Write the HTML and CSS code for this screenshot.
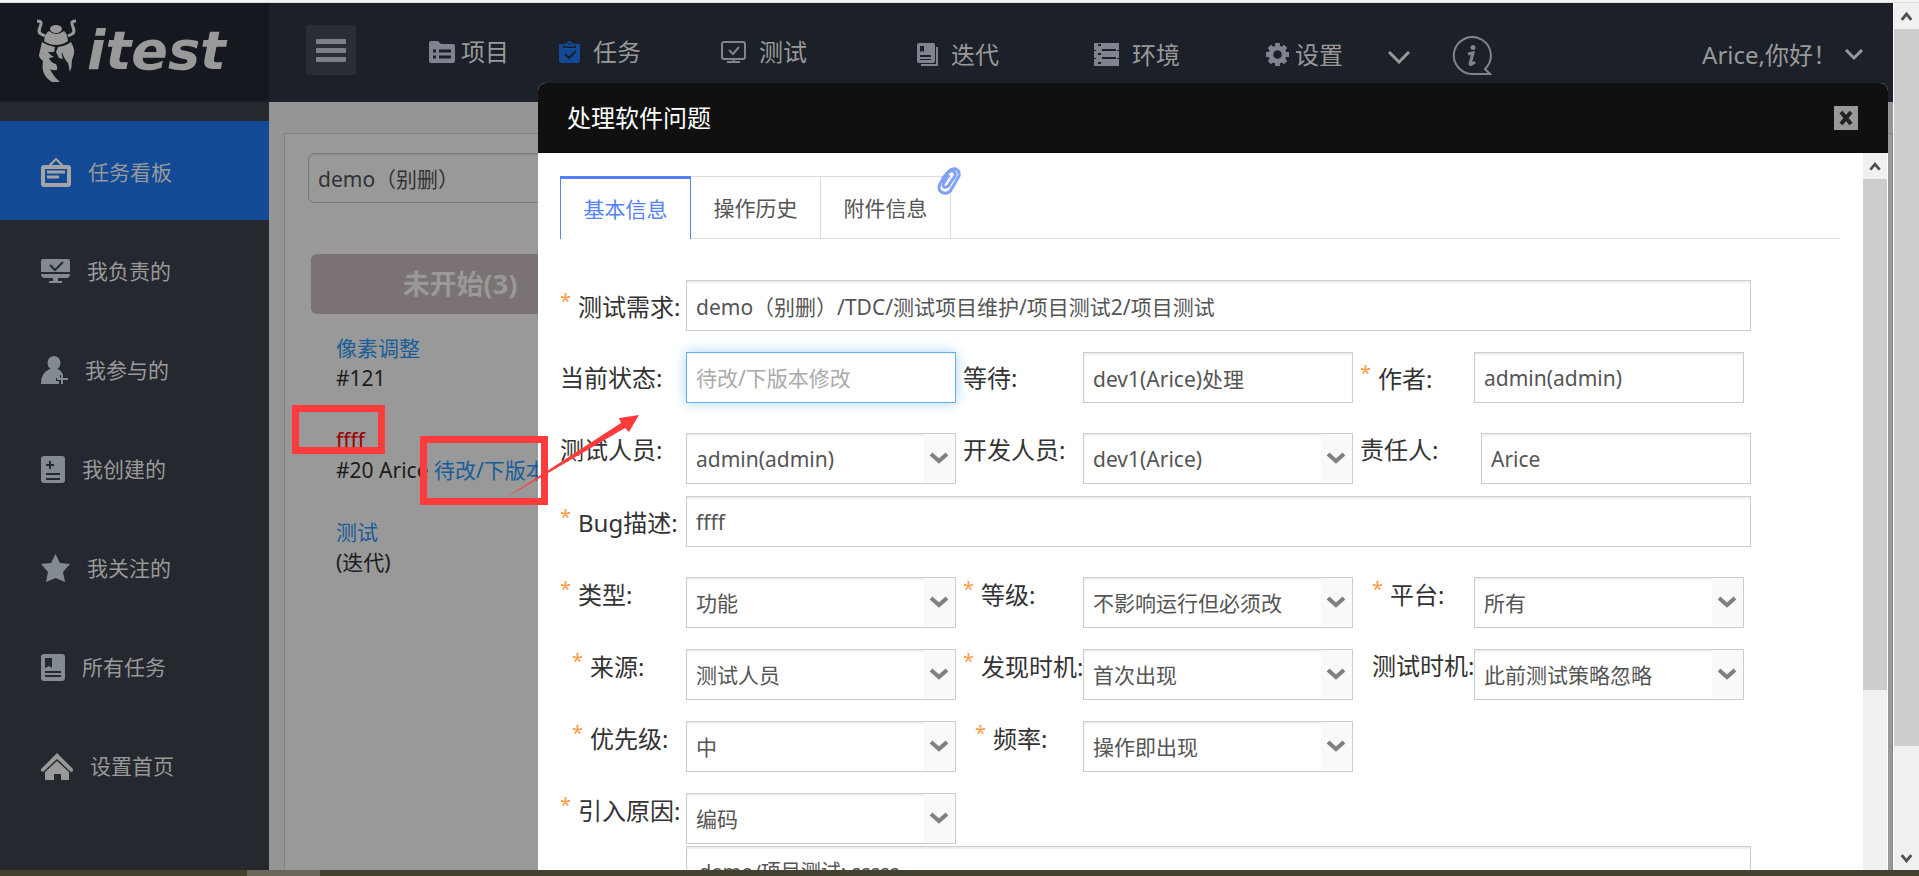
FILE: index.html
```html
<!DOCTYPE html>
<html lang="zh-CN">
<head>
<meta charset="utf-8">
<title>itest - 处理软件问题</title>
<link rel="stylesheet" href="styles.css">
</head>
<body class="screen">
<div class="top-edge"></div>
<div class="viewport">
  <div class="page">
    <header class="header">
      <a class="logo" href="#">
        <svg class="logo-bug" width="42" height="66" viewBox="0 0 42 66" fill="#999">
          <path d="M1 2q5 0 4 3c-1 4-4 8 0 10l4 2M40 2q-5 0-4 3c1 4 4 8 0 10l-4 2" fill="none" stroke="#999" stroke-width="3"/>
          <ellipse cx="20" cy="10" rx="6" ry="4"/>
          <path d="M13 12q7 6 15 0q3 2 4 10q-5 4-12 4t-12-4q1-8 5-10z"/>
          <path d="M6 23q6 4 13 5l-1 5-6 0q3 4 6 5l-5 1q2 5 7 6q2 3 1 6-4 1-7-1q3 7 10 13l-8 0q-7-4-9-11q-1-5 0-10-4-3-4-6z"/>
          <path d="M22 28q8-1 13-5q4 7 3 12l-2 6q0 7-2 12l-2-9q-4-4-6-11-1 3 1 7l-4-1-3-6z"/>
        </svg>
        <span class="logo-text">itest</span>
      </a>
      <button class="menu-btn" aria-label="菜单"><span class="bar"></span><span class="bar"></span><span class="bar"></span></button>
      <nav class="nav">
        <a class="nav-item tight" href="#">
          <svg width="26" height="22" viewBox="0 0 26 22"><path d="M2 0h7l3 3h12q2 0 2 2v15q0 2-2 2H2q-2 0-2-2V2q0-2 2-2z" fill="#80848e"/><path d="M4 10h3M10 10h12M4 16h3M10 16h12" stroke="#1c2028" stroke-width="3"/></svg>
          <span>项目</span></a>
        <a class="nav-item" href="#">
          <svg width="21" height="22" viewBox="0 0 21 22"><path d="M0 3h4v4h13V3h4v17q0 2-2 2H2q-2 0-2-2z" fill="#124a96"/><path d="M5 5V3h3a2.500 2.500 0 0 1 5 0h3v2z" fill="#124a96" stroke="#124a96"/><circle cx="10.500" cy="3" r="1" fill="#1c2028"/><path d="M6 13l4 4 7-7" fill="none" stroke="#1c2028" stroke-width="2"/></svg>
          <span>任务</span></a>
        <a class="nav-item" href="#">
          <svg width="25" height="22" viewBox="0 0 25 22" fill="none" stroke="#80848e" stroke-width="2"><rect x="1" y="1" width="23" height="17" rx="2"/><path d="M8 9l4 4 6-7M12.500 18v3M6 21h13"/></svg>
          <span>测试</span></a>
        <a class="nav-item low" href="#">
          <svg width="21" height="23" viewBox="0 0 21 23"><path d="M2 0h14q2 0 2 2v16q0 2-2 2H2q-2 0-2-2V2q0-2 2-2z" fill="#80848e"/><path d="M20 4v18H4" fill="none" stroke="#80848e" stroke-width="2"/><path d="M3 3h4v6L5 8 3 9zM3 12h11v2H3zM3 16h11v1H3z" fill="#1c2028"/></svg>
          <span>迭代</span></a>
        <a class="nav-item low" href="#">
          <svg width="25" height="23" viewBox="0 0 25 23" fill="#80848e"><rect width="25" height="7"/><rect x="2" y="7" width="21" height="9"/><rect y="8" width="25" height="7"/><rect y="16" width="25" height="7"/><path d="M4 2h3M4 11h3M4 20h3M8 7h14M8 15h14" stroke="#1c2028" stroke-width="2"/></svg>
          <span>环境</span></a>
        <a class="nav-item low tight" href="#">
          <svg width="23" height="23" viewBox="0 0 24 24"><circle cx="12" cy="12" r="7" fill="none" stroke="#80848e" stroke-width="5"/><path d="M12 0v4M12 20v4M0 12h4M20 12h4M3.500 3.500l3 3M17.500 17.500l3 3M3.500 20.500l3-3M17.500 6.500l3-3" stroke="#80848e" stroke-width="5"/></svg>
          <span>设置</span></a>
        <button class="plain" aria-label="更多"><svg width="22" height="13" viewBox="0 0 22 13" fill="none" stroke="#999" stroke-width="3"><path d="M1 1l10 10L21 1"/></svg></button>
        <button class="plain info" aria-label="帮助"><svg width="40" height="40" viewBox="0 0 40 40" fill="none" stroke="#80848e" stroke-width="2"><path d="M33 33l5 5H20A18.500 18.500 0 1 1 33 33z"/><circle cx="21" cy="11.500" r="2.500" fill="#80848e" stroke="none"/><path d="M16 18l5-1-3 11q0 1 2 0l3-2" stroke-width="3"/></svg></button>
      </nav>
      <button class="user">Arice,你好！<svg width="18" height="12" viewBox="0 0 18 12" fill="none" stroke="#999" stroke-width="3"><path d="M1 1l8 8 8-8"/></svg></button>
    </header>
    <div class="body">
      <aside class="sidebar">
        <a class="side-item active" href="#"><svg width="30" height="30" viewBox="0 0 30 30" fill="none" stroke="#a4a4a4"><rect x="2" y="10" width="26" height="18" rx="1" stroke-width="4"/><path d="M8 9l7-7 7 7" stroke-width="2"/><path d="M6 15h18M6 20h12" stroke-width="3"/></svg><span>任务看板</span></a>
        <a class="side-item" href="#"><svg width="29" height="24" viewBox="0 0 29 24" fill="#838a91"><path d="M2 0h25q2 0 2 2v11H0V2q0-2 2-2zM0 15h29q0 4-4 4H4q-4 0-4-4zM12 19h5v3h4v2H8v-2h4z"/><path d="M9 6l5 5 8-8" fill="none" stroke="#25282f" stroke-width="2"/></svg><span>我负责的</span></a>
        <a class="side-item" href="#"><svg width="27" height="28" viewBox="0 0 27 28" fill="#838a91"><ellipse cx="13" cy="7" rx="6.500" ry="7"/><path d="M9 13h8q4 2 5 6h-3v3h-4v3h3v3H0q0-12 9-15z"/><path d="M21 18v10M16 23h11" stroke="#838a91" stroke-width="2"/></svg><span>我参与的</span></a>
        <a class="side-item" href="#"><svg width="24" height="27" viewBox="0 0 24 27"><rect width="24" height="27" rx="3" fill="#838a91"/><path d="M9 5v8M5 9h8M5 18h14M5 23h14" stroke="#25282f" stroke-width="2"/></svg><span>我创建的</span></a>
        <a class="side-item" href="#"><svg width="29" height="28" viewBox="0 0 29 28" fill="#838a91"><path d="M14.500 0l4.500 9 10 1-7 8 2 10-9.500-4L5 28l2-10-7-8 10-1z"/></svg><span>我关注的</span></a>
        <a class="side-item" href="#"><svg width="24" height="27" viewBox="0 0 24 27"><rect width="24" height="27" rx="3" fill="#838a91"/><path d="M4 4h7v10l-3-2-4 2z" fill="#25282f"/><path d="M4 18h16M4 22h16" stroke="#25282f" stroke-width="2"/></svg><span>所有任务</span></a>
        <a class="side-item" href="#"><svg width="32" height="27" viewBox="0 0 32 27" fill="#999"><path d="M0 16L16 0l16 16v2l-2 1L16 6 2 19l-2-1z"/><path d="M4 19L16 8l12 11v8h-8v-6h-7v6H4z"/></svg><span>设置首页</span></a>
      </aside>
      <main class="board">
        <section class="panel">
          <input class="project" type="text" value="demo（别删）" aria-label="项目">
          <div class="column">
            <h2 class="column-title">未开始(3)</h2>
            <ul class="cards">
              <li><a class="card-link" href="#">像素调整</a><br>#121</li>
              <li><a class="card-link late" href="#">ffff</a><br>#20 Arice <a class="card-link" href="#">待改/下版本修改</a></li>
              <li><a class="card-link" href="#">测试</a><br>(迭代)</li>
            </ul>
          </div>
        </section>
      </main>
    </div>

    <section class="dialog" role="dialog" aria-labelledby="dialog-title">
      <div class="dialog-head">
        <h1 id="dialog-title" class="dialog-title">处理软件问题</h1>
        <button class="close" aria-label="关闭"><svg width="24" height="24" viewBox="0 0 24 24" fill="none" stroke="#222" stroke-width="4"><path d="M7 6l10 12M17 6L7 18"/></svg></button>
      </div>
      <div class="dialog-body">
        <div class="dialog-content">
          <div class="tabs" role="tablist">
            <button class="tab selected" role="tab" aria-selected="true">基本信息</button>
            <button class="tab" role="tab">操作历史</button>
            <button class="tab" role="tab">附件信息<svg class="clip" width="24" height="28" viewBox="0 0 24 28" fill="none" stroke="#7fa2f8" stroke-width="3"><path d="M5 12l7-8q3-3 7-2 4 2 3 7l-8 14q-3 4-7 3-5-1-5-6 0-2 2-5l7-9q2-3 5-2t2 5l-7 10q-2 2-4 1t0-4l5-8"/></svg></button>
          </div>
          <form class="form">
            <label class="label req" for="f1">测试需求:</label>
            <div class="field wide"><input id="f1" class="control" type="text" value="demo（别删）/TDC/测试项目维护/项目测试2/项目测试"></div>

            <label class="label" for="f2">当前状态:</label>
            <div class="field"><input id="f2" class="control focused" type="text" placeholder="待改/下版本修改"></div>
            <label class="label next" for="f3">等待:</label>
            <div class="field"><input id="f3" class="control" type="text" value="dev1(Arice)处理"></div>
            <label class="label next req" for="f4">作者:</label>
            <div class="field"><input id="f4" class="control" type="text" value="admin(admin)"></div>

            <label class="label first" for="f5">测试人员:</label>
            <div class="field drop"><select id="f5" class="control"><option>admin(admin)</option></select><svg class="arrow" viewBox="0 0 31 48"><path d="M7 20l8 7 8-7"/></svg></div>
            <label class="label next" for="f6">开发人员:</label>
            <div class="field drop"><select id="f6" class="control"><option>dev1(Arice)</option></select><svg class="arrow" viewBox="0 0 31 48"><path d="M7 20l8 7 8-7"/></svg></div>
            <label class="label next" for="f7">责任人:</label>
            <div class="field drop end"><input id="f7" class="control" type="text" value="Arice"></div>

            <label class="label req" for="f8">Bug描述:</label>
            <div class="field wide"><input id="f8" class="control" type="text" value="ffff"></div>

            <label class="label first req" for="f9">类型:</label>
            <div class="field drop"><select id="f9" class="control"><option>功能</option></select><svg class="arrow" viewBox="0 0 31 48"><path d="M7 20l8 7 8-7"/></svg></div>
            <label class="label next req" for="f10">等级:</label>
            <div class="field drop"><select id="f10" class="control"><option>不影响运行但必须改</option></select><svg class="arrow" viewBox="0 0 31 48"><path d="M7 20l8 7 8-7"/></svg></div>
            <label class="label next indent req" for="f11">平台:</label>
            <div class="field drop"><select id="f11" class="control"><option>所有</option></select><svg class="arrow" viewBox="0 0 31 48"><path d="M7 20l8 7 8-7"/></svg></div>

            <label class="label first indent req" for="f12">来源:</label>
            <div class="field drop"><select id="f12" class="control"><option>测试人员</option></select><svg class="arrow" viewBox="0 0 31 48"><path d="M7 20l8 7 8-7"/></svg></div>
            <label class="label next req" for="f13">发现时机:</label>
            <div class="field drop"><select id="f13" class="control"><option>首次出现</option></select><svg class="arrow" viewBox="0 0 31 48"><path d="M7 20l8 7 8-7"/></svg></div>
            <label class="label next indent" for="f14">测试时机:</label>
            <div class="field drop"><select id="f14" class="control"><option>此前测试策略忽略</option></select><svg class="arrow" viewBox="0 0 31 48"><path d="M7 20l8 7 8-7"/></svg></div>

            <label class="label first indent req" for="f15">优先级:</label>
            <div class="field drop"><select id="f15" class="control"><option>中</option></select><svg class="arrow" viewBox="0 0 31 48"><path d="M7 20l8 7 8-7"/></svg></div>
            <label class="label next indent req" for="f16">频率:</label>
            <div class="field drop"><select id="f16" class="control"><option>操作即出现</option></select><svg class="arrow" viewBox="0 0 31 48"><path d="M7 20l8 7 8-7"/></svg></div>

            <label class="label first req" for="f17">引入原因:</label>
            <div class="field drop"><select id="f17" class="control"><option>编码</option></select><svg class="arrow" viewBox="0 0 31 48"><path d="M7 20l8 7 8-7"/></svg></div>
            <div class="field wide text-row"><textarea class="control note" rows="4" aria-label="说明">demo/项目测试: sssss</textarea></div>
          </form>
        </div>
        <div class="scrollbar inner">
          <svg class="sb-arrow" viewBox="0 0 26 26"><path d="M8 17l5-6 5 6"/></svg>
          <div class="sb-track"><div class="sb-thumb"></div></div>
        </div>
      </div>
    </section>

    <svg class="marks" width="360" height="110" viewBox="0 0 360 110">
      <g fill="none" stroke="#ff3b3b" stroke-width="7"><rect x="3.500" y="5.500" width="86" height="42"/><rect x="131.500" y="36.500" width="121" height="62"/></g>
      <path d="M215 94L329 20l-2-5 20-3-10 17-4-4z" fill="#ff3b3b"/>
    </svg>
  </div>
  <div class="scrollbar">
    <svg class="sb-arrow" viewBox="0 0 26 26"><path d="M8 17l5-6 5 6"/></svg>
    <div class="sb-track"><div class="sb-thumb long"></div></div>
    <svg class="sb-arrow" viewBox="0 0 26 26"><path d="M8 11l5 6 5-6"/></svg>
  </div>
</div>
<div class="bottom-edge"><div class="edge-light"></div></div>
</body>
</html>
```
FILE: styles.css
```css
* { box-sizing: border-box; }
.screen {
  margin: 0;
  height: 100vh;
  display: flex;
  flex-direction: column;
  overflow: hidden;
  font: 21px/30px "Noto Sans", "Noto Sans CJK SC", sans-serif;
  color: #333;
}
a { text-decoration: none; color: inherit; }
button, input, select, textarea { font: inherit; color: inherit; }
.top-edge { height: 3px; background: #f4f4f4; border-bottom: 1px solid #ddd; }
.viewport { flex: 1; min-height: 0; display: flex; }
.page { flex: 1; min-width: 0; position: relative; display: flex; flex-direction: column; overflow: hidden; background: #959595; }

/* Header */
.header { display: flex; height: 99px; flex: none; background: #1c2028; color: #999; font-size: 24px; }
.logo { width: 269px; display: flex; align-items: flex-start; padding: 16px 0 0 36px; background: #15181e; border-bottom: 1px solid #1c1f26; }
.logo-text { margin: 5px 0 0 9px; font: italic bold 54px/54px "DejaVu Sans", sans-serif; color: #999; }
.menu-btn { width: 50px; height: 50px; margin: 22px 0 0 37px; padding: 0 10px; border: 0; border-radius: 3px; background: #292d36; display: flex; flex-direction: column; justify-content: center; gap: 4px; }
.bar { height: 5px; border-radius: 1px; background: #7b8089; }
.nav { display: grid; grid-template-columns: 130px 162px 196px 177px 172px 122px 64px 40px; margin-left: 73px; align-items: center; }
.nav-item { display: flex; align-items: center; gap: 13px; padding-bottom: 1px; white-space: nowrap; }
.nav-item.tight { gap: 6px; }
.nav-item.low { padding-top: 5px; }
.plain { border: 0; padding: 10px 0 0; background: none; display: flex; }
.plain.info { padding-top: 6px; }
.user { margin-left: auto; padding: 4px 30px 0 0; border: 0; background: none; display: flex; align-items: center; gap: 8px; font-size: 24px; }

/* Sidebar */
.body { flex: 1; min-height: 0; display: flex; }
.sidebar { width: 269px; flex: none; padding-top: 19px; background: #25282f; color: #999; }
.side-item { height: 99px; padding: 3px 0 0 41px; display: flex; align-items: center; gap: 17px; }
.side-item.active { background: #124a96; }

/* Board */
.board { flex: 1; min-width: 0; padding: 31px 0 0 15px; }
.panel { height: 100%; padding: 19px 20px 0 23px; background: #999; border: 1px solid #828282; border-bottom: 0; }
.project { display: block; width: 360px; height: 50px; padding: 0 9px; border: 1px solid #7a7a7a; border-radius: 6px; background: #999; box-shadow: inset 0 2px 2px #8f8f8f; }
.column { width: 298px; margin: 51px 0 0 3px; }
.column-title { margin: 0; height: 60px; border-radius: 6px; background: #7b7274; color: #999; text-align: center; font-size: 27px; line-height: 60px; }
.cards { list-style: none; margin: 19px 0 0; padding: 0 0 0 25px; display: flex; flex-direction: column; gap: 32px; white-space: nowrap; color: #1c1c1c; }
.card-link { color: #185c98; }
.card-link.late { color: #990000; }

/* Dialog */
.dialog { position: absolute; left: 538px; right: 5px; top: 80px; bottom: 0; display: flex; flex-direction: column; background: #fff; border-radius: 8px 8px 0 0; overflow: hidden; }
.dialog-head { flex: none; height: 70px; padding: 0 30px 0 29px; display: flex; align-items: center; justify-content: space-between; background: #101010; }
.dialog-title { margin: 0; font-size: 24px; font-weight: 400; color: #fff; }
.close { padding: 0; border: 0; display: flex; background: #999; }
.dialog-body { flex: 1; min-height: 0; display: flex; }
.dialog-content { flex: 1; min-width: 0; padding: 23px 24px 0 22px; overflow: hidden; }
.tabs { display: flex; height: 63px; border-bottom: 1px solid #ddd; }
.tab { position: relative; width: 130px; height: 62px; padding: 0; border: 1px solid #ddd; border-width: 1px 1px 0 0; background: #fff; color: #555; }
.tab.selected { width: 131px; height: 63px; border: 1px solid #5581ff; border-width: 3px 1px 0; color: #5581ff; }
.clip { position: absolute; right: -11px; top: -10px; }

/* Form */
.form { display: grid; grid-template-columns: 126px 1fr 127px 1fr 121px 1fr; grid-auto-rows: 72px; margin: 41px 88px 0 0; padding-right: 7px; }
.label { padding-top: 11px; font-size: 24px; white-space: nowrap; }
.label.first { grid-column: 1; }
.label.next { padding-left: 7px; }
.label.indent { padding-left: 12px; }
.label.next.indent { padding-left: 19px; }
.label.req::before { content: "*"; display: inline-block; width: 18px; line-height: 20px; vertical-align: 8px; font-size: 20px; color: #ff9a47; }
.field.wide { grid-column: 2 / -1; margin-right: -7px; }
.field.drop { position: relative; padding-top: 9px; }
.field.end { margin: 0 -7px 0 7px; }
.field.text-row { margin-top: -10px; }
.control { display: block; width: 100%; height: 51px; padding: 0 9px; border: 1px solid #ccc; border-radius: 0; background: #fff; color: #555; box-shadow: inset 0 2px 2px #eee; appearance: none; outline: 0; }
.control::placeholder { color: #aaa; opacity: 1; }
.control.focused { border-color: #66afe9; box-shadow: inset 0 1px 1px #eee, 0 0 12px #a8d4f5; }
.note { height: 120px; padding: 10px 12px; font-size: 20px; resize: none; overflow: hidden; }
.arrow { position: absolute; right: 1px; top: 10px; width: 31px; height: 48px; background: #f9f9f9; fill: none; stroke: #808080; stroke-width: 4; pointer-events: none; }

/* Scrollbars */
.scrollbar { width: 26px; flex: none; display: flex; flex-direction: column; background: #f0f0f0; border-left: 1px solid #fff; }
.scrollbar.inner { width: 25px; border-left: 0; border-right: 1px solid #fff; }
.sb-arrow { flex: none; width: 100%; height: 26px; fill: none; stroke: #505050; stroke-width: 3; }
.sb-track { flex: 1; }
.sb-thumb { height: 74%; background: #cdcdcd; }
.sb-thumb.long { height: 88%; }

/* Annotation marks over the board */
.marks { position: absolute; left: 292px; top: 400px; pointer-events: none; }

.bottom-edge { height: 6px; flex: none; padding-left: 247px; background: #45412f; }
.edge-light { width: 73px; height: 6px; background: #6a675a; }
```
